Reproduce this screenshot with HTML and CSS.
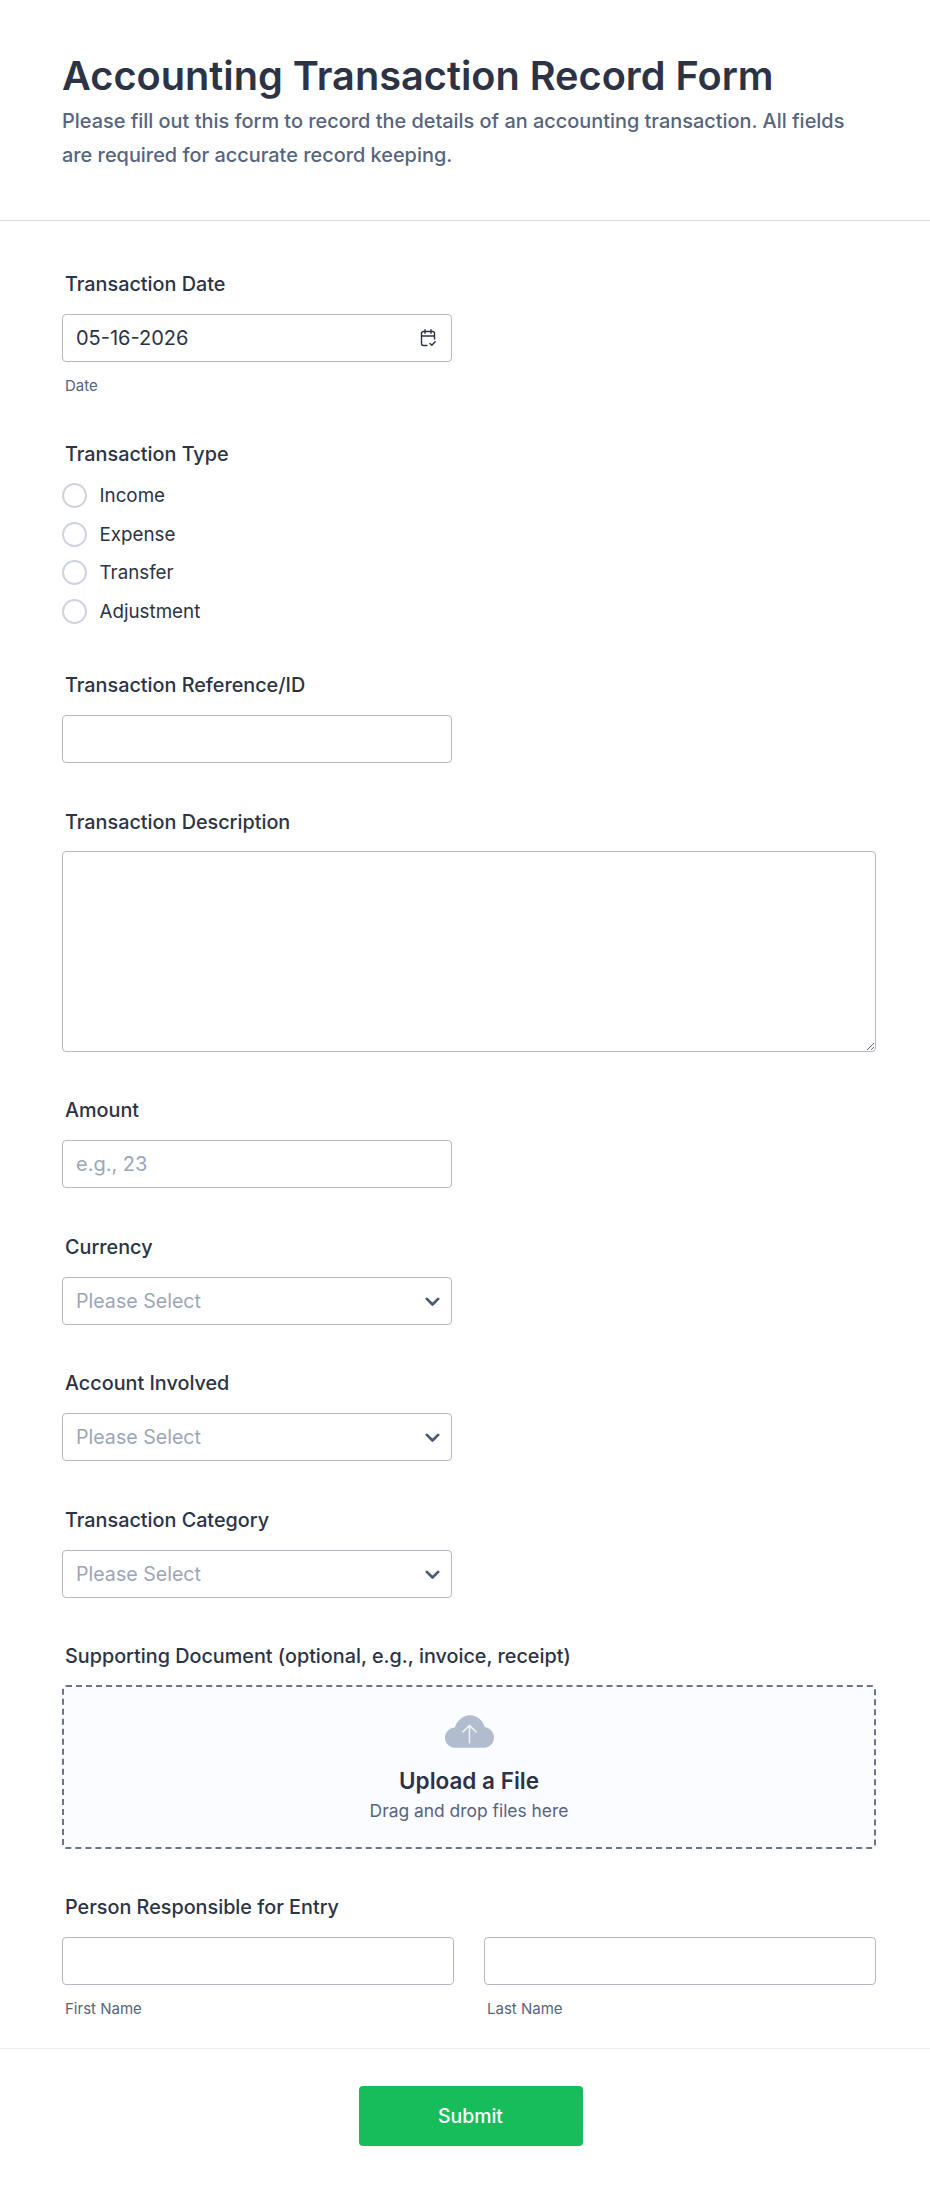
FILE: index.html
```html
<!DOCTYPE html>
<html>
  <head>
    <title>Accounting Transaction Record Form</title>
    <link rel="stylesheet" href="styles.css">
  </head>
  <body>
    <form class="form">
      <div class="form-header">
        <h1>Accounting Transaction Record Form</h1>
        <p>Please fill out this form to record the details of an accounting transaction. All fields are required for accurate record keeping.</p>
      </div>

      <div class="form-body">
        <div class="field">
          <label class="field-label">Transaction Date</label>
          <div class="control short">
            <input class="input" type="text" value="05-16-2026">
            <svg class="calendar-icon" viewBox="0 0 20 20" fill="none" stroke="#2c3345" stroke-width="1.4" stroke-linecap="round" stroke-linejoin="round">
              <path d="M9 17.5H5.5a2 2 0 0 1-2-2V5.500a2 2 0 0 1 2-2h9a2 2 0 0 1 2 2V11"/>
              <path d="M3.500 8h13M7 1.800v3.400M13 1.800v3.400"/>
              <path d="M12 15.500l1.800 1.800 3.400-3.600"/>
            </svg>
          </div>
          <div class="sublabel">Date</div>
        </div>

        <div class="field">
          <label class="field-label">Transaction Type</label>
          <div class="radio-list">
            <label class="radio"><span class="radio-circle"></span>Income</label>
            <label class="radio"><span class="radio-circle"></span>Expense</label>
            <label class="radio"><span class="radio-circle"></span>Transfer</label>
            <label class="radio"><span class="radio-circle"></span>Adjustment</label>
          </div>
        </div>

        <div class="field">
          <label class="field-label">Transaction Reference/ID</label>
          <div class="control short"><input class="input" type="text"></div>
        </div>

        <div class="field">
          <label class="field-label">Transaction Description</label>
          <textarea class="textarea"></textarea>
        </div>

        <div class="field">
          <label class="field-label">Amount</label>
          <div class="control short"><input class="input" type="text" placeholder="e.g., 23"></div>
        </div>

        <div class="field">
          <label class="field-label">Currency</label>
          <div class="control short">
            <select class="input select"><option>Please Select</option></select>
            <svg class="chevron" viewBox="0 0 12 8" fill="none" stroke="#4c5a75" stroke-width="2.200" stroke-linecap="round" stroke-linejoin="round"><path d="M1.500 1.500L6 6l4.500-4.500"/></svg>
          </div>
        </div>

        <div class="field">
          <label class="field-label">Account Involved</label>
          <div class="control short">
            <select class="input select"><option>Please Select</option></select>
            <svg class="chevron" viewBox="0 0 12 8" fill="none" stroke="#4c5a75" stroke-width="2.200" stroke-linecap="round" stroke-linejoin="round"><path d="M1.500 1.500L6 6l4.500-4.500"/></svg>
          </div>
        </div>

        <div class="field">
          <label class="field-label">Transaction Category</label>
          <div class="control short">
            <select class="input select"><option>Please Select</option></select>
            <svg class="chevron" viewBox="0 0 12 8" fill="none" stroke="#4c5a75" stroke-width="2.200" stroke-linecap="round" stroke-linejoin="round"><path d="M1.500 1.500L6 6l4.500-4.500"/></svg>
          </div>
        </div>

        <div class="field upload-field">
          <label class="field-label upload-label">Supporting Document (optional, e.g., invoice, receipt)</label>
          <div class="upload">
            <svg class="cloud-icon" viewBox="0 0 48 32">
              <path fill="#b1bccf" d="M11 32C4.900 32 0 27.600 0 22c0-5.300 4.200-9.500 9.700-10C11.900 4.900 17.600 0 24.500 0c7 0 12.900 5 14.300 11.700C44 12.500 48 16.700 48 22c0 5.600-4.900 10-11 10z"/>
              <path fill="none" stroke="#f3f5fa" stroke-width="1.400" stroke-linecap="round" stroke-linejoin="round" d="M24 27V10M17.500 16.500L24 10l6.500 6.500"/>
            </svg>
            <div class="upload-title">Upload a File</div>
            <div class="upload-text">Drag and drop files here</div>
          </div>
        </div>

        <div class="field last">
          <label class="field-label">Person Responsible for Entry</label>
          <div class="name-row">
            <div>
              <input class="input" type="text">
              <div class="sublabel">First Name</div>
            </div>
            <div>
              <input class="input" type="text">
              <div class="sublabel">Last Name</div>
            </div>
          </div>
        </div>
      </div>

      <div class="form-footer">
        <button class="submit" type="button">Submit</button>
      </div>
    </form>
  </body>
</html>
```

FILE: styles.css
```css
* {
  box-sizing: border-box;
}

body {
  margin: 0;
  background-color: #fff;
  color: #2c3345;
  font-family: Inter, "Liberation Sans", sans-serif;
}

.form-header {
  height: 221px;
  padding: 52px 62px 0;
  border-bottom: 1px solid #d8dae9;
}

h1 {
  margin: 0 0 5px;
  font-size: 39.700px;
  line-height: 48px;
  font-weight: 600;
}

p {
  margin: 0;
  font-size: 19.900px;
  line-height: 33.600px;
  font-weight: 500;
  color: #57647e;
  width: 800px;
}

.form-body {
  padding: 52px 54px 0 62px;
}

.field {
  margin-bottom: 47.500px;
}

.field.last {
  margin-bottom: 0;
}

.field-label {
  display: block;
  margin: 0 0 19px 3px;
  font-size: 19.800px;
  line-height: 22px;
  font-weight: 500;
  color: #2c3345;
}

.control {
  position: relative;
}

.control.short {
  width: 390px;
}

.input {
  display: block;
  width: 100%;
  height: 48px;
  padding: 0 13px;
  border: 1px solid #b4b8ca;
  border-radius: 4px;
  background-color: #fff;
  font-family: Inter, "Liberation Sans", sans-serif;
  font-size: 20px;
  color: #2c3345;
  outline: none;
}

.input::placeholder {
  color: #9ba6b9;
}

.select {
  appearance: none;
  font-size: 19.600px;
  color: #9ba6b9;
}

.textarea {
  display: block;
  width: 100%;
  height: 201px;
  margin: -1px 0 1px;
  border: 1px solid #b4b8ca;
  border-radius: 4px;
  outline: none;
}

.calendar-icon {
  position: absolute;
  top: 14px;
  right: 14px;
  width: 20px;
  height: 20px;
}

.chevron {
  position: absolute;
  top: 20px;
  right: 12px;
  width: 15px;
  height: 10px;
}

.sublabel {
  margin: 15px 0 0 3px;
  font-size: 15px;
  line-height: 18px;
  color: #57647e;
}

.radio-list {
  display: flex;
  flex-direction: column;
  gap: 12.600px;
  margin: -1px 0 50px;
}

.radio {
  display: flex;
  align-items: center;
  gap: 12.500px;
  height: 26px;
  font-size: 18.800px;
  color: #2c3345;
}

.radio-circle {
  width: 25px;
  height: 25px;
  border: 2px solid #d0d3df;
  border-radius: 50%;
}

.upload-field {
  margin-bottom: 46.500px;
}

.upload-label {
  margin-bottom: 18px;
}

.upload {
  height: 164px;
  padding-top: 28px;
  border: 2px dashed #6b7488;
  border-radius: 4px;
  background-color: #fbfcff;
  text-align: center;
}

.cloud-icon {
  display: block;
  width: 49px;
  height: 33px;
  margin: 0 auto 19px;
}

.upload-title {
  font-size: 22.500px;
  line-height: 28px;
  font-weight: 600;
}

.upload-text {
  margin-top: 4px;
  font-size: 17.400px;
  line-height: 24px;
  color: #57647e;
}

.name-row {
  display: grid;
  grid-template-columns: 392px 392px;
  gap: 30px;
}

.form-footer {
  margin-top: 30px;
  padding: 37px 0 47px 11px;
  border-top: 1px solid #eaebf2;
  text-align: center;
}

.submit {
  width: 224px;
  height: 60px;
  border: none;
  border-radius: 4px;
  background-color: #18bd5b;
  color: #fff;
  font-family: Inter, "Liberation Sans", sans-serif;
  font-size: 19.400px;
  font-weight: 500;
}
```
